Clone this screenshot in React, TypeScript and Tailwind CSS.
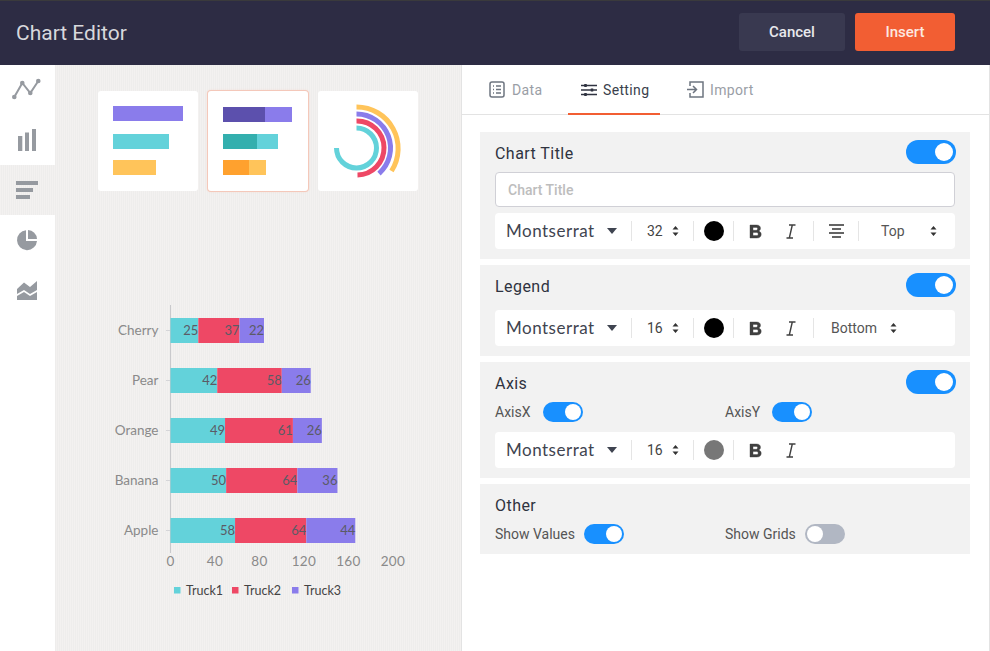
import type { ReactNode } from "react";

const font = { fontFamily: "Roboto, sans-serif" };
const MONT = "Lato, 'Open Sans', sans-serif";

function Toggle({ on = true, small = false }: { on?: boolean; small?: boolean }) {
  return (
    <div
      className={`flex shrink-0 items-center rounded-full ${small ? "h-5 w-10 p-[2px]" : "h-6 w-[50px] p-[2px]"} ${on ? "justify-end bg-[#1890ff]" : "justify-start bg-[#b1b7c3]"}`}
    >
      <div className={`rounded-full bg-white ${small ? "size-4" : "size-[18px] mr-[1px]"}`} />
    </div>
  );
}

function Updown() {
  return (
    <svg width="7" height="12" viewBox="0 0 7 12" className="shrink-0">
      <path d="M3.500 1 6.500 4.500H.5z M3.500 11 .5 7.500h6z" fill="#333" />
    </svg>
  );
}

function Divider() {
  return <div className="h-5 w-px shrink-0 bg-[#e5e5e5]" />;
}

function Toolbar({ size, color, align, pos }: { size: string; color: string; align?: boolean; pos?: string }) {
  return (
    <div className="flex h-9 items-center rounded-sm bg-white">
      <div className="flex w-[136px] shrink-0 items-center pl-[11px]">
        <span className="w-[101px] text-[17px] tracking-[0.5px] text-[#3f4450]" style={{ fontFamily: MONT }}>Montserrat</span>
        <svg width="10" height="6" viewBox="0 0 10 6"><path d="M0 0h10L5 6z" fill="#3f4450" /></svg>
      </div>
      <Divider />
      <div className="flex w-[61px] shrink-0 items-center pl-[15px] text-sm text-[#444]">
        <span className="w-[25px]">{size}</span>
        <Updown />
      </div>
      <Divider />
      <div className="flex w-[39px] shrink-0 justify-center">
        <div className="size-5 rounded-full" style={{ backgroundColor: color }} />
      </div>
      <Divider />
      <div className="flex w-[79px] shrink-0 items-center">
        <svg width="14" height="15" viewBox="0 0 14 15" className="ml-[15px]">
          <path fillRule="evenodd" d="M1 1h6.500c2.600 0 4 1.300 4 3.300 0 1.300-.7 2.300-1.800 2.800 1.500.4 2.500 1.600 2.500 3.200 0 2.300-1.600 3.700-4.400 3.700H1zM4 3.400v2.900h3c1 0 1.600-.6 1.600-1.500S8 3.400 7 3.400zm0 5v3.200h3.400c1.100 0 1.800-.6 1.800-1.600S8.500 8.400 7.400 8.400z" fill="#404040" stroke="#404040" strokeWidth="0.400" />
        </svg>
        <svg width="10" height="15" viewBox="0 0 10 15" className="ml-[23px]">
          <path d="M3 1h6.500M.5 14H7M6.300 1 3.300 14" stroke="#404040" strokeWidth="1.400" fill="none" />
        </svg>
      </div>
      {(align || pos) && <Divider />}
      {align && (
        <>
          <div className="flex w-[44px] shrink-0 justify-center">
            <svg width="15" height="14" viewBox="0 0 15 14"><path d="M0 1h15M3 5h9M0 9h15M3 13h9" stroke="#333" strokeWidth="1.500" /></svg>
          </div>
          <Divider />
          <div className="flex items-center text-sm text-[#555]">
            <span className="ml-[22px] w-[49px]">Top</span>
            <Updown />
          </div>
        </>
      )}
      {pos && (
        <div className="flex items-center text-sm text-[#555]">
          <span className="ml-[17px] w-[59px]">{pos}</span>
          <Updown />
        </div>
      )}
    </div>
  );
}

function Section({ children, className = "" }: { children?: ReactNode; className?: string }) {
  return <div className={`bg-[#f2f2f2] px-[15px] ${className}`}>{children}</div>;
}

function Head({ title, toggle = true }: { title: string; toggle?: boolean }) {
  return (
    <div className="flex h-6 items-center justify-between">
      <span className="pt-1 text-base tracking-[0.45px] text-[#2f3340]">{title}</span>
      {toggle && <div className="-mr-[1px]"><Toggle /></div>}
    </div>
  );
}

function Labeled({ label, on = true, w, gap }: { label: string; on?: boolean; w: string; gap: string }) {
  return (
    <div className={`flex items-center ${w} ${gap}`}>
      <span className="text-sm text-[#555]">{label}</span>
      <Toggle on={on} small />
    </div>
  );
}

function TabIcon({ kind }: { kind: "data" | "setting" | "import" }) {
  if (kind === "data")
    return (
      <svg width="16" height="17" viewBox="0 0 16 17" fill="none" stroke="#6e7580" strokeWidth="1.500">
        <rect x="1" y="1" width="14" height="15" rx="2" />
        <path d="M4 5h1M7 5h5M4 8.500h1M7 8.500h5M4 12h1M7 12h5" />
      </svg>
    );
  if (kind === "setting")
    return (
      <svg width="16" height="14" viewBox="0 0 16 14" fill="none" stroke="#2f3340" strokeWidth="1.500">
        <path d="M0 2.500h16M0 7h16M0 11.500h16" />
        <path d="M4.500 1v3M11 5.500v3M4.500 10v3" strokeWidth="2.500" />
      </svg>
    );
  return (
    <svg width="17" height="17" viewBox="0 0 17 17" fill="none" stroke="#6e7580" strokeWidth="1.500">
      <path d="M3 5V1h13v15H3v-4" />
      <path d="M0 8.500h9M6 5l3.500 3.500L6 12" />
    </svg>
  );
}

function Tab({ kind, label, active, w }: { kind: "data" | "setting" | "import"; label: string; active?: boolean; w: string }) {
  return (
    <div className={`flex h-[50px] items-center border-b-2 pt-[2px] text-sm tracking-[0.35px] ${w} ${active ? "border-[#f25e33] text-[#3a3f4c]" : "border-transparent text-[#9a9ea6]"}`}>
      <TabIcon kind={kind} />
      <span>{label}</span>
    </div>
  );
}

function SideIcon({ children, active }: { children: ReactNode; active?: boolean }) {
  return (
    <div className={active ? "h-[50px]" : "h-[50px] bg-white"}>
      <svg width="55" height="50" viewBox="0 0 55 50" fill="#969aa0" className="block">{children}</svg>
    </div>
  );
}

function Thumb({ children, active }: { children: ReactNode; active?: boolean }) {
  return (
    <div className={`size-[100px] rounded-[3px] bg-white ${active ? "shadow-[0_0_0_1px_#f4c8ba,0_0_3px_#f4c8ba]" : ""}`}>
      {children}
    </div>
  );
}

const rows = [
  { name: "Cherry", y: 318, v: [25, 37, 22] },
  { name: "Pear", y: 368, v: [42, 58, 26] },
  { name: "Orange", y: 418, v: [49, 61, 26] },
  { name: "Banana", y: 468, v: [50, 64, 36] },
  { name: "Apple", y: 518, v: [58, 64, 44] },
];
const colors = ["#63d2da", "#ee4865", "#8a7ceb"];
const x0 = 170.5;
const scale = 1.113;
const legendX = [174, 232, 292];

function Chart() {
  return (
    <svg width="406" height="351" viewBox="55 300 406 351" className="mt-[109px] block" style={{ fontFamily: MONT }}>
      <line x1="170.500" y1="305" x2="170.500" y2="553" stroke="#c9c9cc" />
      {rows.map((r) => {
        let x = x0;
        return (
          <g key={r.name}>
            <line x1="166" x2="170" y1={r.y + 12.5} y2={r.y + 12.5} stroke="#d5d5d8" />
            <text x="158.500" y={r.y + 16.5} textAnchor="end" fontSize="13.500" fill="#8a8a8a">{r.name}</text>
            {r.v.map((v, i) => {
              const w = v * scale;
              const sx = x;
              x += w;
              return (
                <g key={i}>
                  <rect x={sx} y={r.y} width={w} height="25" fill={colors[i]} />
                  <text x={sx + w} y={r.y + 17} textAnchor="end" fontSize="13" fill="#5b5b66">{v}</text>
                </g>
              );
            })}
          </g>
        );
      })}
      {[0, 40, 80, 120, 160, 200].map((t, i) => (
        <text key={t} x={170.5 + i * 44.5} y="566" textAnchor="middle" fontSize="13.500" letterSpacing="0.4" fill="#8a8a8a">{t}</text>
      ))}
      {["Truck1", "Truck2", "Truck3"].map((t, i) => (
        <g key={t}>
          <rect x={legendX[i]} y="587" width="6.500" height="6.500" fill={colors[i]} />
          <text x={legendX[i] + 12} y="595" fontSize="12.500" fill="#444">{t}</text>
        </g>
      ))}
    </svg>
  );
}

export default function App() {
  return (
    <div className="flex h-[651px] w-[990px] flex-col overflow-hidden bg-white" style={font}>
      <header className="flex h-[65px] shrink-0 items-center justify-between border-t border-[#3a3a3c] bg-[#2d2c44] pb-[2px] pl-4 pr-[35px]">
        <span className="mt-1 text-[21px] text-[#d8d8dc]">Chart Editor</span>
        <div className="flex gap-[10px]">
          <button className="h-[38px] w-[106px] rounded-[3px] bg-[#393950] text-[15px] font-medium text-[#e8e8ec]">Cancel</button>
          <button className="h-[38px] w-[100px] rounded-[3px] bg-[#f25e33] text-[15px] font-medium text-[#fde8e0]">Insert</button>
        </div>
      </header>
      <div className="flex min-h-0 flex-1">
        <div className="flex w-[461px] shrink-0 bg-[repeating-linear-gradient(90deg,#f3f1f0_0,#f3f1f0_1px,#eeedec_1px,#eeedec_2px)]">
          <aside className="flex w-[55px] shrink-0 flex-col">
            <SideIcon>
              <path d="M14.300 32 22.300 18l8 10 8-12" fill="none" stroke="#969aa0" strokeWidth="2" />
              <circle cx="14.300" cy="32" r="2.300" /><circle cx="22.300" cy="18" r="2.300" /><circle cx="30.300" cy="28" r="2.300" /><circle cx="38.300" cy="16" r="2.300" />
            </SideIcon>
            <SideIcon>
              <rect x="18" y="21" width="4.300" height="15" /><rect x="25" y="17.500" width="4" height="18.500" /><rect x="32" y="14" width="4" height="22" />
            </SideIcon>
            <SideIcon active>
              <rect x="16" y="16" width="22" height="4" /><rect x="16" y="23" width="17" height="4" /><rect x="16" y="30" width="14" height="4" />
            </SideIcon>
            <SideIcon>
              <path d="M26 15.200A10 10 0 1 0 37 26H26z" />
              <path d="M28 15a9.500 9.500 0 0 1 9 9h-9z" />
            </SideIcon>
            <div className="flex-1 bg-white">
              <SideIcon>
                <path d="M17 24l7-6.500 6 4.500 7-6v9l-7 4-6-4-7 4z" />
                <path d="M17 31l7-4 6 4 7-4v8H17z" />
              </SideIcon>
            </div>
          </aside>
          <div className="min-w-0 flex-1">
            <div className="flex gap-[10px] pl-[43px] pt-[26px]">
              <Thumb>
                <div className="flex flex-col pl-[15px] pt-[15px]">
                  <div className="h-[15px] w-[70px] bg-[#8a7ceb]" />
                  <div className="mt-[13px] h-[15px] w-14 bg-[#63d2da]" />
                  <div className="mt-[11px] h-[15px] w-[43px] bg-[#ffc45a]" />
                </div>
              </Thumb>
              <Thumb active>
                <div className="flex flex-col pl-[15px] pt-4">
                  <div className="flex h-[15px]"><div className="w-[42px] bg-[#5c50ad]" /><div className="w-[27px] bg-[#8a7ceb]" /></div>
                  <div className="mt-3 flex h-[15px]"><div className="w-[34px] bg-[#33afae]" /><div className="w-[21px] bg-[#63d2da]" /></div>
                  <div className="mt-[11px] flex h-[15px]"><div className="w-[26px] bg-[#ffa12e]" /><div className="w-[17px] bg-[#ffc45a]" /></div>
                </div>
              </Thumb>
              <Thumb>
                <svg width="100" height="100" viewBox="0 0 100 100" fill="none" strokeWidth="5" className="block">
                  <path d="M38.500 37A20 20 0 1 1 18.500 57" stroke="#63d2da" />
                  <path d="M38.500 30A27 27 0 0 1 39.500 84" stroke="#ee4865" />
                  <path d="M38.500 23A34 34 0 0 1 61 82.500" stroke="#8a7ceb" />
                  <path d="M38.500 16A41.500 41.500 0 0 1 73.500 80" stroke="#ffc45a" />
                </svg>
              </Thumb>
            </div>
            <Chart />
          </div>
        </div>
        <main className="min-w-0 flex-1 border-l border-r border-[#e3e3e3]">
          <div className="flex h-[50px] items-center border-b border-[#e3e3e3] pl-[27px]">
            <Tab kind="data" label="Data" w="w-[79px] gap-[7px]" />
            <Tab kind="setting" label="Setting" active w="w-[92px] gap-[6px] pl-[13px]" />
            <Tab kind="import" label="Import" w="w-[108px] gap-[6px] pl-[27px]" />
          </div>
          <div className="flex w-[508px] flex-col gap-[6px] pl-[18px] pt-[17px]">
            <Section className="h-[127px] pt-[8px]">
              <Head title="Chart Title" />
              <input
                readOnly
                placeholder="Chart Title"
                className="mt-2 block h-[35px] w-full rounded-sm border border-[#d0d0d6] bg-white px-3 text-sm font-medium placeholder:text-[#bdbdbd]"
              />
              <div className="mt-[6px]"><Toolbar size="32" color="#000" align /></div>
            </Section>
            <Section className="h-[91px] pt-[8px]">
              <Head title="Legend" />
              <div className="mt-[13px]"><Toolbar size="16" color="#000" pos="Bottom" /></div>
            </Section>
            <Section className="h-[116px] pt-[8px]">
              <Head title="Axis" />
              <div className="mt-[8px] flex">
                <Labeled label="AxisX" w="w-[230px]" gap="gap-[12px]" />
                <Labeled label="AxisY" w="w-[200px]" gap="gap-[12px]" />
              </div>
              <div className="mt-[10px]"><Toolbar size="16" color="#777" /></div>
            </Section>
            <Section className="h-[70px] pt-[8px]">
              <Head title="Other" toggle={false} />
              <div className="mt-[8px] flex">
                <Labeled label="Show Values" w="w-[230px]" gap="gap-[9px]" />
                <Labeled label="Show Grids" on={false} w="w-[200px]" gap="gap-[9px]" />
              </div>
            </Section>
          </div>
        </main>
      </div>
    </div>
  );
}
